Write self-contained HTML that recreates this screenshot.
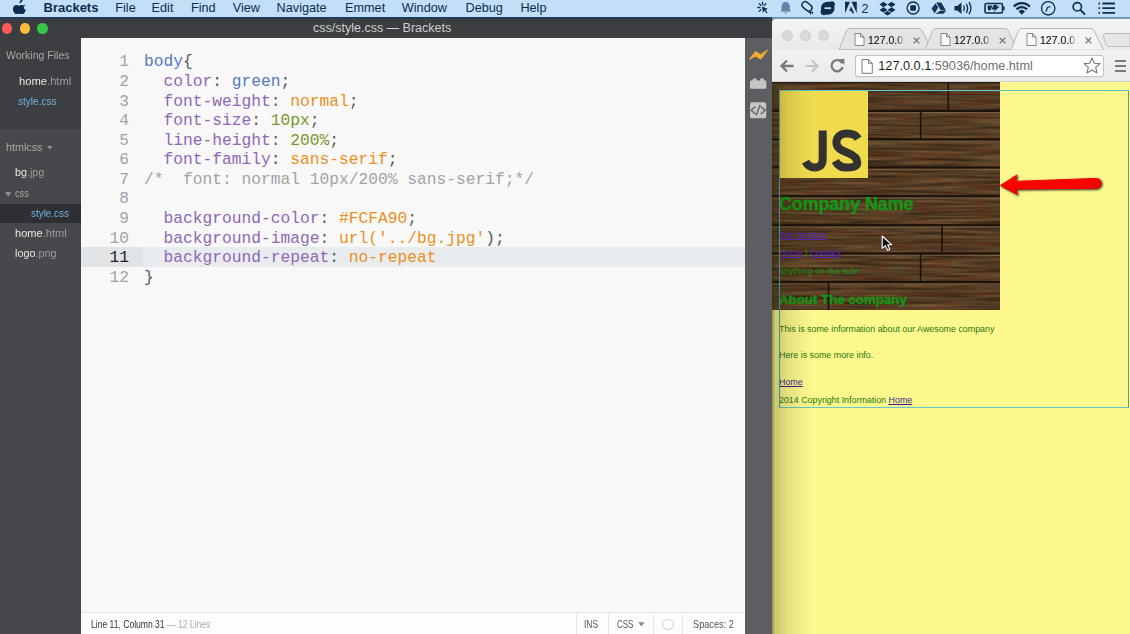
<!DOCTYPE html>
<html><head><meta charset="utf-8">
<style>
*{margin:0;padding:0;box-sizing:border-box}
html,body{width:1130px;height:634px;overflow:hidden;background:#3c3d40;font-family:"Liberation Sans",sans-serif}
.abs{position:absolute}
#menubar{left:0;top:0;width:1130px;height:17px;background:#c3dff7}
#menuline{left:0;top:17px;width:1130px;height:2px;background:linear-gradient(#1b3a62 0,#1f3d64 55%,#34393f 100%)}
.mi{position:absolute;top:0;height:17px;line-height:16px;font-size:12.7px;color:#0d2b4e;white-space:nowrap}
#titlebar{left:0;top:19px;width:772px;height:19px;background:#3c3d40}
#sidebar{left:0;top:38px;width:81px;height:596px;background:#47484b}
#wf{left:0;top:38px;width:81px;height:93px;background:#3d3e41}
.sb{position:absolute;font-size:11.5px;white-space:nowrap;color:#e6e6e6;line-height:14px}
.sb .ext{color:#9a9b9d}
#editor{left:81px;top:38px;width:664px;height:574px;background:#f8f8f8}
#status{left:81px;top:612px;width:664px;height:22px;background:#fdfdfd;border-top:1px solid #e6e6e6}
#tools{left:745px;top:38px;width:27px;height:596px;background:#5d5e61}
.code{position:absolute;font-family:"Liberation Mono",monospace;font-size:16.25px;line-height:19.58px;white-space:pre}
.ln{position:absolute;left:0;width:129px;text-align:right;color:#a2a2a2}
.p{color:#8e68b6}.k{color:#5479be}.o{color:#eb8f1c}.n{color:#78962a}.c{color:#a3a3a3}.pu{color:#5a5a5a}
</style></head><body>
<div id="menubar" class="abs"></div>
<div id="menuline" class="abs"></div>
<div id="titlebar" class="abs"></div>
<div id="sidebar" class="abs"></div>
<div id="wf" class="abs"></div>
<div id="editor" class="abs"></div>
<div id="status" class="abs"></div>
<div id="tools" class="abs"></div>

<svg class="abs" style="left:12.5px;top:-1.5px" width="14" height="15" viewBox="0 0 14 15"><path d="M9.6 0.5c0.1 1-0.3 1.9-0.9 2.6-0.6 0.7-1.5 1.1-2.3 1.1-0.1-0.9 0.3-1.9 0.9-2.5 0.6-0.7 1.6-1.2 2.3-1.2zM12.4 5.3c-0.1 0.1-1.6 0.9-1.6 2.8 0 2.2 1.9 2.9 2 3-0.3 0.8-0.7 1.6-1.2 2.3-0.7 1-1.4 2-2.6 2-1.1 0-1.5-0.7-2.7-0.7-1.3 0-1.7 0.7-2.8 0.7-1.1 0-1.9-1-2.6-2.1C0 11.9-0.5 9.9 0.3 8.3 0.9 7 2.1 6.1 3.3 6.1c1.1 0 1.8 0.7 2.7 0.7 0.9 0 1.4-0.7 2.7-0.7 1 0 2.2 0.5 2.9 1.4z" fill="#0d2b4e"/></svg>

<svg class="abs" style="left:0;top:0" width="1130" height="17" viewBox="0 0 1130 17">
<g fill="none" stroke="#0f2d4f" stroke-width="1.3" stroke-linecap="round">
<path d="M762.5 2.2 V4.5 M757.8 7.5 H760 M759.2 3.6 L760.8 5.2 M765.8 3.6 L764.2 5.2 M759.2 11.4 L760.8 9.8"/>
</g>
<path d="M762 6.5 L768 9 L765.4 9.8 L767.6 12.4 L766.6 13.2 L764.4 10.6 L763 13 Z" fill="#0f2d4f"/>
<path d="M785.7 2 C782.5 2 781.6 4.5 781.6 7.5 V10 L780.3 11.6 H791.2 L789.9 10 V7.5 C789.9 4.5 789 2 785.7 2 Z M784.2 12.4 A1.6 1.6 0 0 0 787.3 12.4 Z" fill="#5f82a8"/>
<g fill="none" stroke="#0f2d4f" stroke-width="1.5">
<rect x="801.5" y="3.2" width="11" height="6.4" rx="3.2" transform="rotate(40 807 6.4)"/>
</g>
<path d="M810.5 10.5 V14.5 M808.5 12.5 H812.5 M812.6 11.6 V14.2" stroke="#0f2d4f" stroke-width="1"/>
<path d="M827.8 1.8 C824 1.8 821 4.6 821 8.2 C821 8.9 821.1 9.5 821.3 10.1 C820.9 10.7 820.6 11.4 820.6 12.1 C820.6 13.9 822 15.2 823.8 15.2 C824.6 15.2 825.3 14.9 825.8 14.5 C826.4 14.7 827.1 14.7 827.8 14.7 C831.5 14.7 834.5 11.8 834.5 8.2 C834.5 7.5 834.4 6.9 834.2 6.3 C834.7 5.7 835 5 835 4.3 C835 2.5 833.6 1.2 831.8 1.2 C831 1.2 830.3 1.5 829.8 1.9 C829.1 1.8 828.5 1.8 827.8 1.8 Z" fill="#0f2d4f"/>
<rect x="824.5" y="7.3" width="6.6" height="1.8" fill="#c3dff7"/>
<path d="M845 1.8 H850 L845 13.2 Z M851.5 1.8 H856.8 V13.2 Z M850.9 6.2 L854.2 13.2 H852.2 L851.3 11 H849.3 Z" fill="#0f2d4f"/>
<text x="861.5" y="13.2" font-family="Liberation Sans" font-size="12.5" fill="#0f2d4f">2</text>
<path d="M883.5 1.8 L879.5 4.5 L883.5 7.2 L887.5 4.5 Z M891.5 1.8 L887.5 4.5 L891.5 7.2 L895.5 4.5 Z M883.5 7.2 L879.5 9.9 L883.5 12.6 L887.5 9.9 Z M891.5 7.2 L887.5 9.9 L891.5 12.6 L895.5 9.9 Z M883.8 13.3 L887.5 15.6 L891.2 13.3 L887.5 10.9 Z" fill="#0f2d4f"/>
<circle cx="913.1" cy="8" r="6" fill="none" stroke="#0f2d4f" stroke-width="1.3"/>
<rect x="910.3" y="5.2" width="5.6" height="5.6" rx="1" fill="#0f2d4f"/>
<path d="M936.2 2.4 H941.3 L946 10.4 H940.8 Z M935.5 3.2 L938.2 7.6 L934.6 13.6 L931.6 8.6 Z M939.6 11.1 H946 L943.4 13.8 H935.6 Z" fill="#14365a"/>
<path d="M954.5 6 H957.3 L961.5 2.6 V14 L957.3 10.6 H954.5 Z" fill="#0f2d4f"/>
<path d="M963.7 5.5 Q965.2 8.3 963.7 11.1 M966.3 3.8 Q969 8.3 966.3 12.8 M969 2.2 Q972.8 8.3 969 14.4" fill="none" stroke="#0f2d4f" stroke-width="1.3"/>
<rect x="985" y="3.5" width="17.5" height="9.5" rx="1.5" fill="none" stroke="#0f2d4f" stroke-width="1.6"/>
<rect x="1003" y="6.5" width="1.6" height="3.5" fill="#0f2d4f"/>
<path d="M987.5 5.5 H992.5 L990.5 10.2 H988 Z M993.8 4.8 L991.5 9.6 H995 L993 12.5 L999.8 6.5 H996.5 L997.5 5 Z" fill="#0f2d4f"/>
<path d="M1013 5.8 A12 12 0 0 1 1030.6 5.8 L1029 7.5 A9.7 9.7 0 0 0 1014.6 7.5 Z M1015.8 8.6 A8 8 0 0 1 1027.8 8.6 L1026.2 10.3 A5.7 5.7 0 0 0 1017.4 10.3 Z M1018.6 11.4 A4 4 0 0 1 1025 11.4 L1021.8 14.8 Z" fill="#0f2d4f"/>
<circle cx="1048.2" cy="8.3" r="6.7" fill="none" stroke="#0f2d4f" stroke-width="1.3"/>
<path d="M1046 11.5 L1047.5 7.5 L1050.5 6.5" fill="none" stroke="#0f2d4f" stroke-width="1.3"/>
<circle cx="1077.3" cy="6.8" r="4.2" fill="none" stroke="#0f2d4f" stroke-width="1.6"/>
<path d="M1080.3 9.8 L1085 14.5" stroke="#0f2d4f" stroke-width="1.8"/>
<path d="M1098.5 3.5 H1100 M1098.5 8.2 H1100 M1098.5 12.9 H1100 M1102.4 3.5 H1115 M1102.4 8.2 H1115 M1102.4 12.9 H1115" stroke="#0f2d4f" stroke-width="1.8"/>
</svg>

<svg class="abs" style="left:745px;top:42px" width="27" height="80" viewBox="0 0 27 80">
<path d="M4.2 17.6 L10.5 9.4 L15.4 12.4 L22.6 8 L16.1 17.1 L10.4 14.2 Z" fill="#f5ac35" stroke="#f5ac35" stroke-width="0.8" stroke-linejoin="round"/>
<circle cx="9.6" cy="38.4" r="2.2" fill="#c6c6c6"/><circle cx="17" cy="38.4" r="2.2" fill="#c6c6c6"/>
<rect x="5" y="38.4" width="16.3" height="8.4" rx="1" fill="#c6c6c6"/>
<rect x="5" y="60.3" width="16.2" height="16" rx="2" fill="#c6c6c6"/>
<path d="M10.6 64.6 L6 68.3 L10.6 72 M15.6 64.6 L20.4 68.3 L15.6 72 M15.1 62.8 L11.3 73.2" fill="none" stroke="#5d5e61" stroke-width="1.3"/>
</svg>
<div class="mi" style="left:43.5px;font-weight:bold;font-size:13px">Brackets</div>
<div class="mi" style="left:115.3px">File</div>
<div class="mi" style="left:151.6px">Edit</div>
<div class="mi" style="left:190.9px">Find</div>
<div class="mi" style="left:232.7px">View</div>
<div class="mi" style="left:276.6px">Navigate</div>
<div class="mi" style="left:345px">Emmet</div>
<div class="mi" style="left:401.8px">Window</div>
<div class="mi" style="left:465.5px">Debug</div>
<div class="mi" style="left:520.4px">Help</div>
<div class="abs" style="left:0;top:19px;width:772px;height:19px;line-height:18px;text-align:center;padding-left:0;font-size:12.5px;color:#cfcfcf"><span style="position:absolute;left:313px;top:0">css/style.css — Brackets</span></div>
<div class="abs" style="left:1.5px;top:22.8px;width:10.8px;height:10.8px;border-radius:50%;background:#fc5b57"></div>
<div class="abs" style="left:19.5px;top:22.8px;width:10.8px;height:10.8px;border-radius:50%;background:#fdbc40"></div>
<div class="abs" style="left:37.1px;top:22.8px;width:10.8px;height:10.8px;border-radius:50%;background:#33c748"></div>

<div class="sb" style="left:5.6px;top:47.56px;font-size:10.8px;color:#a9a9a9;transform:scaleX(0.975);transform-origin:0 0">Working Files</div>
<div class="sb" style="left:18.5px;top:73.78px;font-size:11.6px;transform:scaleX(0.966);transform-origin:0 0">home<span class="ext">.html</span></div>
<div class="sb" style="left:17.9px;top:94.12px;font-size:11.2px;color:#6fb3e0;transform:scaleX(0.898);transform-origin:0 0">style.css</div>
<div class="abs" style="left:0;top:130px;width:81px;height:1px;background:#515256"></div>
<div class="sb" style="left:5.6px;top:140.02px;font-size:11.2px;color:#a9a9a9;transform:scaleX(0.960);transform-origin:0 0">htmlcss</div>
<svg class="abs" style="left:46.5px;top:146px" width="5.5" height="4" viewBox="0 0 5.5 4"><path d="M0 0 H5.5 L2.75 3.6 Z" fill="#8d8e90"/></svg>
<div class="sb" style="left:14.9px;top:165.48px;font-size:11.6px;transform:scaleX(0.924);transform-origin:0 0">bg<span class="ext">.jpg</span></div>
<div class="sb" style="left:14.9px;top:185.98px;font-size:11.6px;color:#a9a9a9;transform:scaleX(0.794);transform-origin:0 0">css</div>
<svg class="abs" style="left:4.5px;top:191.8px" width="6.5" height="5" viewBox="0 0 6.5 5"><path d="M0 0 H6.5 L3.25 4.8 Z" fill="#8d8e90"/></svg>
<div class="abs" style="left:0;top:204.1px;width:81px;height:18.5px;background:#2e2f32"></div>
<div class="sb" style="left:30.8px;top:205.52px;font-size:11.2px;color:#6fb3e0;transform:scaleX(0.884);transform-origin:0 0">style.css</div>
<div class="sb" style="left:14.9px;top:226.38px;font-size:11.6px;transform:scaleX(0.957);transform-origin:0 0">home<span class="ext">.html</span></div>
<div class="sb" style="left:14.9px;top:246.38px;font-size:11.6px;transform:scaleX(0.932);transform-origin:0 0">logo<span class="ext">.png</span></div>
<div class="abs" style="left:81px;top:247px;width:62px;height:19.6px;background:#e1e4e7"></div>
<div class="abs" style="left:143px;top:247px;width:602px;height:19.6px;background:#e9ecee"></div>
<div class="code" style="left:81px;top:52.4px;width:62px"><div class="ln" style="position:relative;width:48px;">1</div><div class="ln" style="position:relative;width:48px;">2</div><div class="ln" style="position:relative;width:48px;">3</div><div class="ln" style="position:relative;width:48px;">4</div><div class="ln" style="position:relative;width:48px;">5</div><div class="ln" style="position:relative;width:48px;">6</div><div class="ln" style="position:relative;width:48px;">7</div><div class="ln" style="position:relative;width:48px;">8</div><div class="ln" style="position:relative;width:48px;">9</div><div class="ln" style="position:relative;width:48px;">10</div><div class="ln" style="position:relative;width:48px;color:#1d1d1d;">11</div><div class="ln" style="position:relative;width:48px;">12</div></div>
<div class="code" style="left:144px;top:52.4px"><span class="k">body</span><span class="pu">{</span>
  <span class="p">color</span><span class="pu">: </span><span class="k">green</span><span class="pu">;</span>
  <span class="p">font-weight</span><span class="pu">: </span><span class="o">normal</span><span class="pu">;</span>
  <span class="p">font-size</span><span class="pu">: </span><span class="n">10px</span><span class="pu">;</span>
  <span class="p">line-height</span><span class="pu">: </span><span class="n">200%</span><span class="pu">;</span>
  <span class="p">font-family</span><span class="pu">: </span><span class="o">sans-serif</span><span class="pu">;</span>
<span class="c">/*  font: normal 10px/200% sans-serif;*/</span>

  <span class="p">background-color</span><span class="pu">: </span><span class="o">#FCFA90</span><span class="pu">;</span>
  <span class="p">background-image</span><span class="pu">: </span><span class="o">url('../bg.jpg'</span><span class="pu">);</span>
  <span class="p">background-repeat</span><span class="pu">: </span><span class="o">no-repeat</span>
<span class="pu">}</span></div>

<div class="abs" style="left:90.6px;top:618.26px;line-height:12px;font-size:10.5px;color:#333;white-space:nowrap;transform:scaleX(0.815);transform-origin:0 0">Line 11, Column 31 <span style="color:#aaa">— 12 Lines</span></div>
<div class="abs" style="left:576px;top:613px;width:1px;height:21px;background:#e8e8e8"></div>
<div class="abs" style="left:608px;top:613px;width:1px;height:21px;background:#e8e8e8"></div>
<div class="abs" style="left:653px;top:613px;width:1px;height:21px;background:#e8e8e8"></div>
<div class="abs" style="left:682px;top:613px;width:1px;height:21px;background:#e8e8e8"></div>
<div class="abs" style="left:584.4px;top:618.26px;line-height:12px;font-size:10.5px;color:#555;white-space:nowrap;transform:scaleX(0.8);transform-origin:0 0">INS</div>
<div class="abs" style="left:617.4px;top:618.26px;line-height:12px;font-size:10.5px;color:#555;white-space:nowrap;transform:scaleX(0.76);transform-origin:0 0">CSS</div>
<svg class="abs" style="left:638px;top:621.5px" width="7" height="5" viewBox="0 0 7 5"><path d="M0.3 0.3 H6.5 L3.4 4.6 Z" fill="#8a8a8a"/></svg>
<div class="abs" style="left:662.3px;top:618.7px;width:11.4px;height:11.4px;border-radius:50%;border:1px solid #cfcfcf"></div>
<div class="abs" style="left:692.7px;top:618.26px;line-height:12px;font-size:10.5px;color:#555;white-space:nowrap;transform:scaleX(0.875);transform-origin:0 0">Spaces: 2</div>

<div class="abs" style="left:772px;top:17px;width:358px;height:2px;background:linear-gradient(#6b8fb6,#7e9cbd)"></div>
<div class="abs" style="left:772px;top:17px;width:358px;height:2px;background:#1b3a62"></div><div class="abs" style="left:772px;top:17px;width:358px;height:2px;background:linear-gradient(#6b8fb6,#7e9cbd);border-top-left-radius:0"></div><div class="abs" style="left:772px;top:19px;width:358px;height:31px;background:linear-gradient(#f4f4f4,#e9e9e9);border-top-left-radius:3px"></div>
<div class="abs" style="left:781.9px;top:29.5px;width:11.2px;height:11.2px;border-radius:50%;background:#d9d9d9;border:1px solid #cfcfcf"></div>
<div class="abs" style="left:799.8px;top:29.5px;width:11.2px;height:11.2px;border-radius:50%;background:#d9d9d9;border:1px solid #cfcfcf"></div>
<div class="abs" style="left:817.8px;top:29.5px;width:11.2px;height:11.2px;border-radius:50%;background:#d9d9d9;border:1px solid #cfcfcf"></div>
<svg class="abs" style="left:837.5px;top:27px" width="94.5" height="24" viewBox="0 0 94.5 24"><path d="M1 23 L8.5 3.5 Q9.5 1.5 12 1.5 L80.5 1.5 Q83.0 1.5 84.0 3.5 L93.5 23 Z" fill="#e4e4e4" stroke="#b8b8b8" stroke-width="1"/><line x1="0" y1="23" x2="94.5" y2="23" stroke="#b8b8b8"/></svg><svg class="abs" style="left:853.5px;top:33px" width="11" height="13" viewBox="0 0 11 13"><path d="M1 0.5 H6.5 L10 4 V12.5 H1 Z M6.5 0.5 V4 H10" fill="#fff" stroke="#7a7a7a" stroke-width="0.9"/></svg><div class="abs" style="left:868.0px;top:32.6px;width:37px;height:14px;overflow:hidden;font-size:10.5px;line-height:14px;color:#111;-webkit-text-stroke:0.1px #111;white-space:nowrap;-webkit-mask-image:linear-gradient(90deg,#000 78%,transparent)">127.0.0.1</div><svg class="abs" style="left:912.5px;top:36.5px" width="7" height="7" viewBox="0 0 7 7"><path d="M0.6 0.6 L6.4 6.4 M6.4 0.6 L0.6 6.4" stroke="#6a6a6a" stroke-width="1.15"/></svg><svg class="abs" style="left:923.5px;top:27px" width="94.5" height="24" viewBox="0 0 94.5 24"><path d="M1 23 L8.5 3.5 Q9.5 1.5 12 1.5 L80.5 1.5 Q83.0 1.5 84.0 3.5 L93.5 23 Z" fill="#e4e4e4" stroke="#b8b8b8" stroke-width="1"/><line x1="0" y1="23" x2="94.5" y2="23" stroke="#b8b8b8"/></svg><svg class="abs" style="left:939.5px;top:33px" width="11" height="13" viewBox="0 0 11 13"><path d="M1 0.5 H6.5 L10 4 V12.5 H1 Z M6.5 0.5 V4 H10" fill="#fff" stroke="#7a7a7a" stroke-width="0.9"/></svg><div class="abs" style="left:954.0px;top:32.6px;width:37px;height:14px;overflow:hidden;font-size:10.5px;line-height:14px;color:#111;-webkit-text-stroke:0.1px #111;white-space:nowrap;-webkit-mask-image:linear-gradient(90deg,#000 78%,transparent)">127.0.0.1</div><svg class="abs" style="left:998.5px;top:36.5px" width="7" height="7" viewBox="0 0 7 7"><path d="M0.6 0.6 L6.4 6.4 M6.4 0.6 L0.6 6.4" stroke="#6a6a6a" stroke-width="1.15"/></svg><div class="abs" style="left:772px;top:49.5px;width:358px;height:1px;background:#b8b8b8"></div><svg class="abs" style="left:1009.5px;top:27px" width="94.5" height="24" viewBox="0 0 94.5 24"><path d="M1 23 L8.5 3.5 Q9.5 1.5 12 1.5 L80.5 1.5 Q83.0 1.5 84.0 3.5 L93.5 23 Z" fill="#f4f4f4" stroke="#b8b8b8" stroke-width="1"/><rect x="1.8" y="22.5" width="90.9" height="2" fill="#f4f4f4"/></svg><svg class="abs" style="left:1025.5px;top:33px" width="11" height="13" viewBox="0 0 11 13"><path d="M1 0.5 H6.5 L10 4 V12.5 H1 Z M6.5 0.5 V4 H10" fill="#fff" stroke="#7a7a7a" stroke-width="0.9"/></svg><div class="abs" style="left:1040.0px;top:32.6px;width:37px;height:14px;overflow:hidden;font-size:10.5px;line-height:14px;color:#111;-webkit-text-stroke:0.1px #111;white-space:nowrap;-webkit-mask-image:linear-gradient(90deg,#000 78%,transparent)">127.0.0.1</div><svg class="abs" style="left:1084.5px;top:36.5px" width="7" height="7" viewBox="0 0 7 7"><path d="M0.6 0.6 L6.4 6.4 M6.4 0.6 L0.6 6.4" stroke="#6a6a6a" stroke-width="1.15"/></svg><svg class="abs" style="left:1102px;top:32px" width="28" height="16" viewBox="0 0 28 16"><path d="M7 14.5 Q4.5 14.5 3.8 12.5 L1.5 4 Q1.2 1.5 4 1.5 L28 1.5 L28 14.5 Z" fill="#e6e6e6" stroke="#bdbdbd" stroke-width="1"/></svg>
<div class="abs" style="left:772px;top:50px;width:358px;height:32px;background:linear-gradient(#f1f1f1,#ebebeb)"></div>
<svg class="abs" style="left:779px;top:58px" width="16" height="16" viewBox="0 0 16 16"><path d="M14.5 8 H3 M8 2.5 L2.5 8 L8 13.5" fill="none" stroke="#7b7b7b" stroke-width="2.4"/></svg>
<svg class="abs" style="left:804px;top:58px" width="16" height="16" viewBox="0 0 16 16"><path d="M1.5 8 H13 M8 2.5 L13.5 8 L8 13.5" fill="none" stroke="#c4c4c4" stroke-width="2.2"/></svg>
<svg class="abs" style="left:829px;top:57px" width="17" height="17" viewBox="0 0 17 17"><path d="M13.2 6.2 A5.6 5.6 0 1 0 13.6 10" fill="none" stroke="#7b7b7b" stroke-width="2.3"/><path d="M9.5 2.3 L15.5 1.8 L15.3 7.8 Z" fill="#7b7b7b"/></svg>
<div class="abs" style="left:854.5px;top:54.7px;width:249px;height:22.6px;background:#fff;border:1px solid #c2c2c2;border-radius:3px;box-shadow:0 1px 0 #e4e4e4"></div>
<svg class="abs" style="left:861px;top:59px" width="12" height="15" viewBox="0 0 12 15"><path d="M1 0.5 H7.5 L11.3 4.3 V14.3 H1 Z M7.5 0.5 V4.3 H11.3" fill="#fff" stroke="#7a7a7a" stroke-width="1"/></svg>
<div class="abs" style="left:878.3px;top:58px;font-size:12.7px;line-height:16px;color:#1e1e1e;white-space:nowrap">127.0.0.1<span style="color:#707070">:59036/home.html</span></div>
<svg class="abs" style="left:1083px;top:57px" width="18" height="17" viewBox="0 0 18 17"><path d="M9 1 L11.3 6.2 L17 6.6 L12.7 10.3 L14 16 L9 13 L4 16 L5.3 10.3 L1 6.6 L6.7 6.2 Z" fill="#fff" stroke="#777" stroke-width="1.1" stroke-linejoin="round"/></svg>
<div class="abs" style="left:1115px;top:60px;width:11px;height:2.2px;background:#7a7a7a"></div>
<div class="abs" style="left:1115px;top:64.8px;width:11px;height:2.2px;background:#7a7a7a"></div>
<div class="abs" style="left:1115px;top:69.6px;width:11px;height:2.2px;background:#7a7a7a"></div>

<div class="abs" style="left:772px;top:81px;width:358px;height:1px;background:#cfcfcf"></div>
<div id="page" class="abs" style="left:772px;top:82px;width:358px;height:552px;background:#fcf88e;overflow:hidden"><div class="abs" style="left:0;top:0;width:228px;height:228px;overflow:hidden"><svg class="abs" style="left:0;top:0" width="228" height="228" viewBox="0 0 228 228"><defs><filter id="wd" x="0" y="0" width="100%" height="100%" color-interpolation-filters="sRGB">
<feTurbulence type="fractalNoise" baseFrequency="0.015 0.35" numOctaves="3" seed="7" result="n"/>
<feColorMatrix type="matrix" values="0.38 0 0 0 0.135  0.3 0 0 0 0.09  0.2 0 0 0 0.045  0 0 0 0 1"/>
</filter>
<filter id="wd2" x="0" y="0" width="100%" height="100%" color-interpolation-filters="sRGB">
<feTurbulence type="fractalNoise" baseFrequency="0.05 0.2" numOctaves="2" seed="21"/>
<feColorMatrix type="matrix" values="0 0 0 0 0.42  0 0 0 0 0.18  0 0 0 0 0.08  0 1.8 0 0 -0.8"/>
</filter></defs>
<rect width="228" height="228" filter="url(#wd)"/>
<rect width="228" height="228" filter="url(#wd2)" opacity="0.8"/><rect x="0" y="27.7" width="228" height="2.3" fill="#1b120a"/><rect x="0" y="30.0" width="228" height="1.2" fill="#8a7a58" opacity="0.55"/><rect x="0" y="56.3" width="228" height="2.3" fill="#1b120a"/><rect x="0" y="58.6" width="228" height="1.2" fill="#8a7a58" opacity="0.55"/><rect x="0" y="84.4" width="228" height="2.3" fill="#1b120a"/><rect x="0" y="86.7" width="228" height="1.2" fill="#8a7a58" opacity="0.55"/><rect x="0" y="113.1" width="228" height="2.3" fill="#1b120a"/><rect x="0" y="115.4" width="228" height="1.2" fill="#8a7a58" opacity="0.55"/><rect x="0" y="142.1" width="228" height="2.3" fill="#1b120a"/><rect x="0" y="144.4" width="228" height="1.2" fill="#8a7a58" opacity="0.55"/><rect x="0" y="170.4" width="228" height="2.3" fill="#1b120a"/><rect x="0" y="172.7" width="228" height="1.2" fill="#8a7a58" opacity="0.55"/><rect x="0" y="199.0" width="228" height="2.3" fill="#1b120a"/><rect x="0" y="201.3" width="228" height="1.2" fill="#8a7a58" opacity="0.55"/><rect x="0" y="0" width="228" height="1.5" fill="#2a2014"/><rect x="175.5" y="0.0" width="1.6" height="28.3" fill="#1b120a"/><rect x="147.9" y="28.3" width="1.6" height="28.6" fill="#1b120a"/><rect x="169.2" y="142.7" width="1.6" height="28.3" fill="#1b120a"/><rect x="147.8" y="171.0" width="1.6" height="28.6" fill="#1b120a"/><rect x="55.7" y="199.6" width="1.6" height="28.4" fill="#1b120a"/></svg></div><svg class="abs" style="left:8px;top:8px" width="88" height="88" viewBox="0 0 88 88"><rect width="88" height="88" fill="#f0db4f"/>
<path d="M42.7 40.4 V68.5 C42.7 75.5 39.5 77.4 34.5 77.4 C30 77.4 27.5 75.3 25.6 71.6" fill="none" stroke="#323330" stroke-width="8"/>
<path d="M78.2 48.6 C76 45 72.5 43.5 67.2 43.5 C60.8 43.5 56.4 46.8 56.4 52.3 C56.4 58 60.8 60.2 67 62.5 C73.5 64.9 77.3 67.5 77.3 72.6 C77.3 76 73.5 77.6 66.8 77.6 C61 77.6 57.6 75.3 55.3 71" fill="none" stroke="#323330" stroke-width="8"/>
</svg><div class="abs" style="left:7px;top:112.3px;font-size:17.8px;line-height:20.47px;color:#169416;white-space:nowrap;font-weight:bold;-webkit-text-stroke:0.5px #169416;">Company Name</div><div class="abs" style="left:7px;top:148.2px;font-size:8.9px;line-height:10.23px;color:#5b23c8;white-space:nowrap;text-decoration:underline">Site Section</div><div class="abs" style="left:7px;top:166.40px;font-size:8.9px;line-height:10.23px;color:#5b23c8;white-space:nowrap;"><span style="text-decoration:underline">Home</span> <span style="color:#169416">|</span> <span style="text-decoration:underline">Contact</span></div><div class="abs" style="left:7px;top:183.60px;font-size:8.9px;line-height:10.23px;color:#169416;white-space:nowrap;">anything on the side</div><div class="abs" style="left:7px;top:209.5px;font-size:13.3px;line-height:15.29px;color:#169416;white-space:nowrap;font-weight:bold;-webkit-text-stroke:0.4px #169416;">About The company</div><div class="abs" style="left:7px;top:241.70px;font-size:8.9px;line-height:10.23px;color:#26780f;white-space:nowrap;">This is some information about our Awesome company</div><div class="abs" style="left:7px;top:268.30px;font-size:8.9px;line-height:10.23px;color:#26780f;white-space:nowrap;">Here is some more info.</div><div class="abs" style="left:7px;top:295.4px;font-size:8.9px;line-height:10.23px;color:#3a1f8a;white-space:nowrap;text-decoration:underline">Home</div><div class="abs" style="left:7px;top:312.60px;font-size:8.9px;line-height:10.23px;color:#26780f;white-space:nowrap;">2014 Copyright Information <span style="color:#3a1f8a;text-decoration:underline">Home</span></div><div class="abs" style="left:7px;top:7.6px;width:350px;height:318.5px;border:1px solid #66c4cc;border-left-color:#4d9fc4;border-right-color:#5f9a82"></div><div class="abs" style="left:0;top:0;width:42px;height:552px;background:linear-gradient(90deg,rgba(40,40,10,0.5) 0,rgba(40,40,0,0.24) 3px,rgba(40,40,0,0.12) 15px,rgba(40,40,0,0.04) 30px,rgba(0,0,0,0) 42px)"></div></div>
<svg class="abs" style="left:990px;top:165px;filter:drop-shadow(1.5px 1.8px 1.2px rgba(0,0,0,0.85))" width="125" height="40" viewBox="990 165 125 40">
<path d="M1000.5 185.3 L1017 175 L1015.3 181.4 L1096.2 178.4 A4.9 4.9 0 0 1 1096.2 188.2 L1015.3 189 L1017.5 194.5 Z" fill="#fe0000" stroke="#fe0000" stroke-width="1" stroke-linejoin="round"/></svg>
<svg class="abs" style="left:881.2px;top:234.9px" width="13" height="17" viewBox="0 0 13 17"><path d="M1.2 1 V13.3 L4.4 10.6 L6.5 15.3 L8.7 14.4 L6.7 9.8 L10.6 9.6 Z" fill="#111" stroke="#fff" stroke-width="1.1" stroke-linejoin="round"/></svg>
</body></html>
